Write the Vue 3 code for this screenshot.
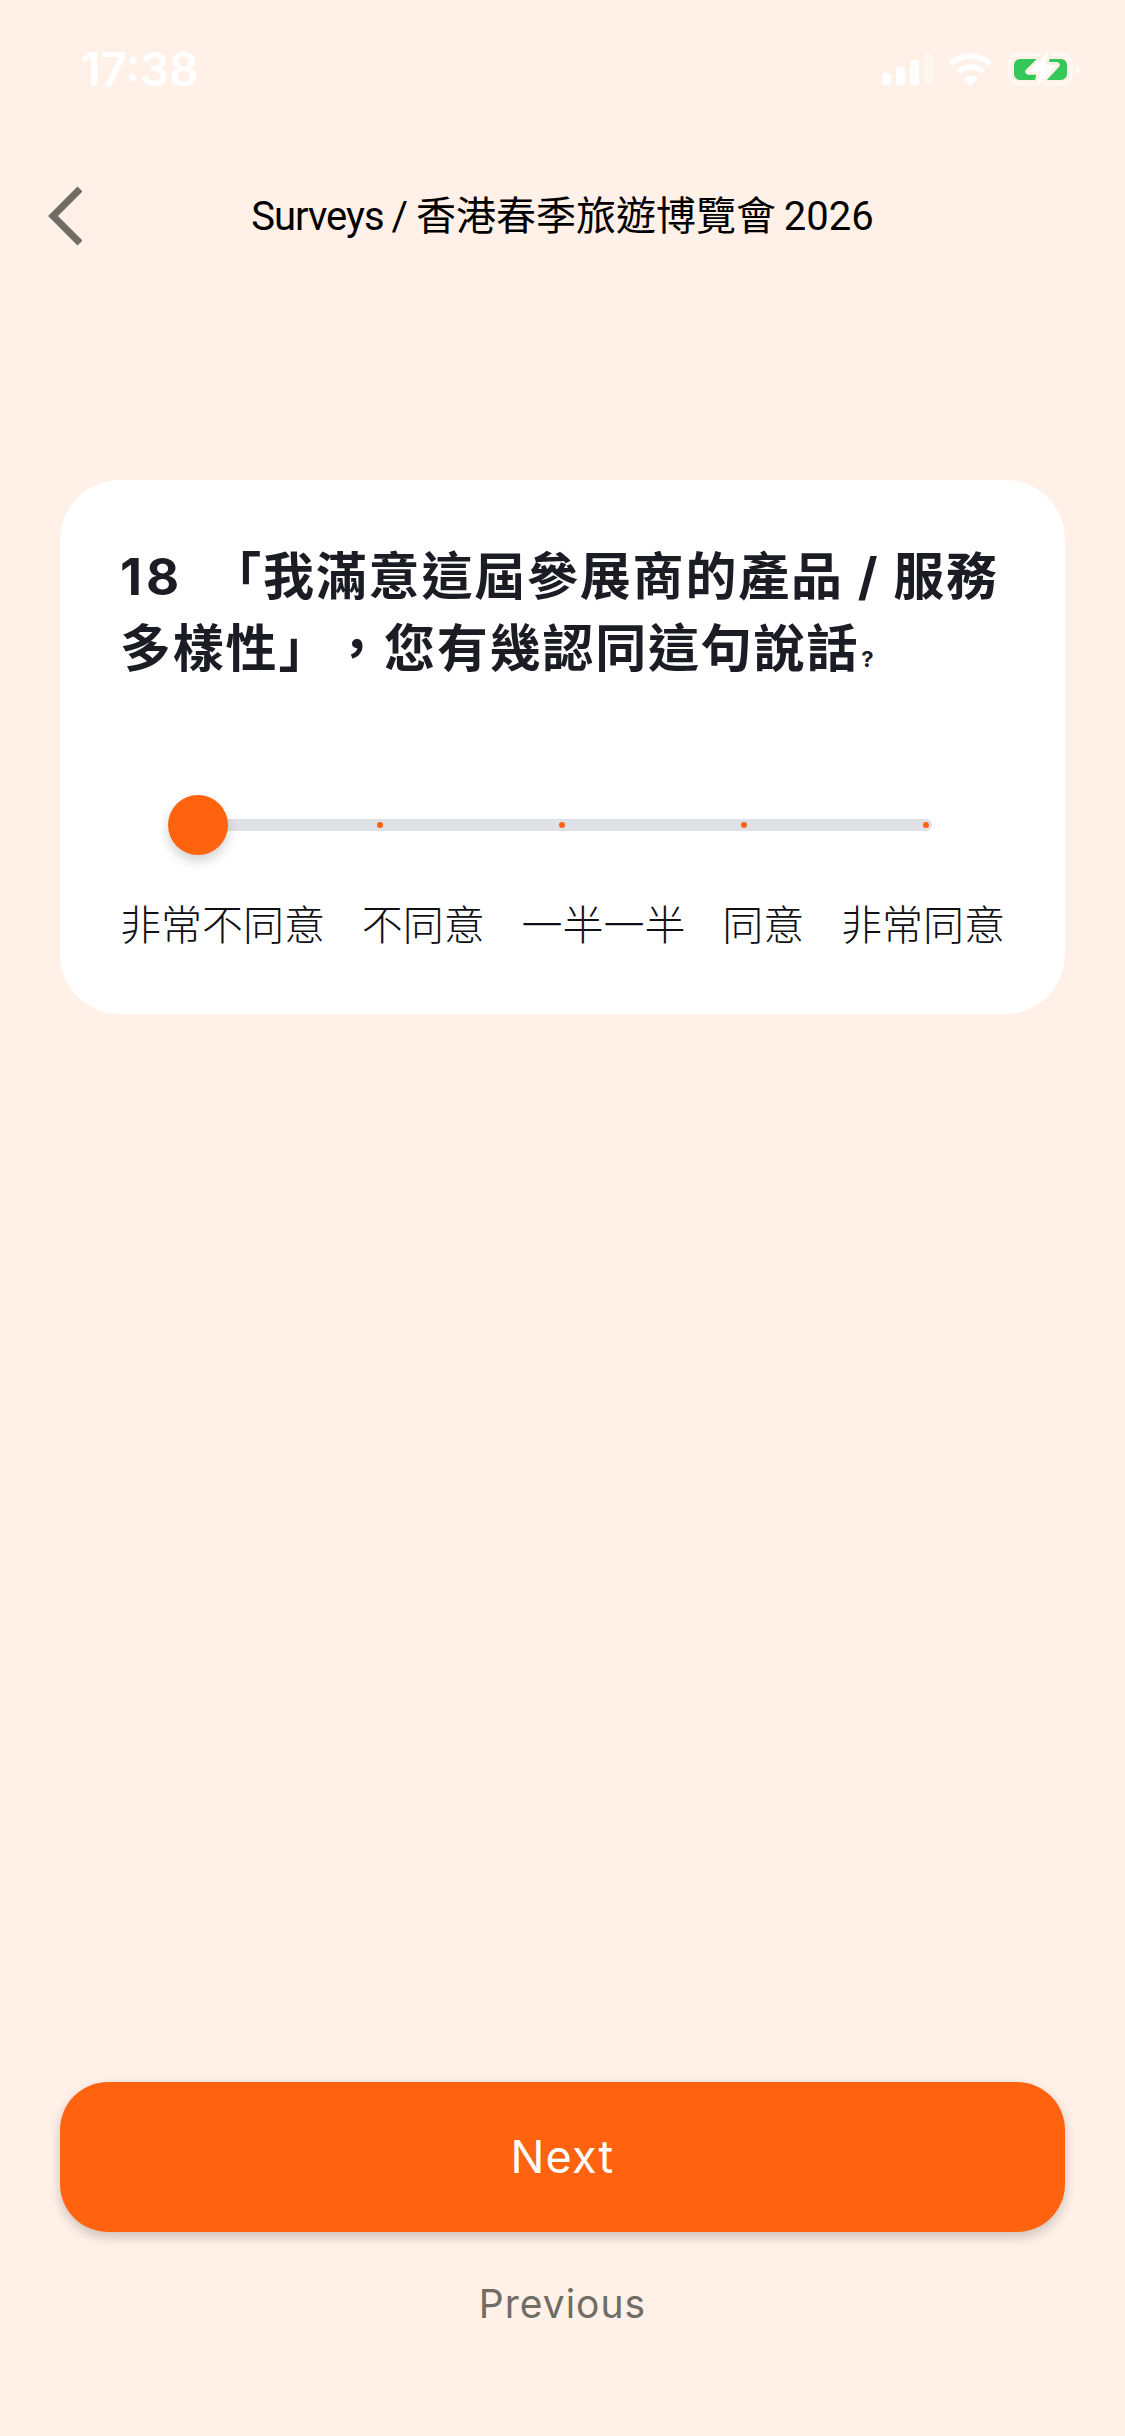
<template>
  <div class="survey-screen">
    <!-- status bar -->
    <div class="status-bar">
      <span class="time">17:38</span>
      <div class="status-icons">
        <svg class="signal" width="51" height="32" viewBox="0 0 51 32">
          <rect x="0" y="20" width="9" height="12" rx="3" fill="#fff" />
          <rect x="14" y="14" width="9" height="18" rx="3" fill="#fff" />
          <rect x="28" y="7" width="9" height="25" rx="3" fill="#fff" />
          <rect x="42" y="0" width="9" height="32" rx="3" fill="#fff" opacity="0.35" />
        </svg>
        <svg class="wifi" width="45" height="33" viewBox="0 0 45 33">
          <path d="M22.5 33 L15.5 25.5 A10 10 0 0 1 29.5 25.5 Z" fill="#fff" />
          <path d="M10 19 A18 18 0 0 1 35 19" fill="none" stroke="#fff" stroke-width="5.5" />
          <path d="M2.5 11 A29 29 0 0 1 42.5 11" fill="none" stroke="#fff" stroke-width="5.5" />
        </svg>
        <svg class="battery" width="74" height="38" viewBox="0 0 74 38">
          <rect x="1.5" y="4.5" width="62" height="29" rx="10" fill="none" stroke="#fff" stroke-width="3" opacity="0.5" />
          <path d="M68 14 Q72 16 72 19 Q72 22 68 24 Z" fill="#fff" opacity="0.6" />
          <rect x="6" y="9" width="53" height="21" rx="6" fill="#34c759" />
          <path d="M40.3 1.7 L20.3 21.7 L32 21.7 L28.7 36.7 L48.7 15 L37 15 Z" fill="#fff" stroke="#fff1e8" stroke-width="6" paint-order="stroke" stroke-linejoin="round" />
        </svg>
      </div>
    </div>

    <!-- header -->
    <header class="top-bar">
      <svg class="back" width="35" height="60" viewBox="0 0 35 60">
        <path d="M33 3 L6 30 L33 57" fill="none" stroke="#706c66" stroke-width="7" />
      </svg>
      <h1 class="top-title"><span class="crumb">Surveys</span> / 香港春季旅遊博覽會 2026</h1>
    </header>

    <!-- question card -->
    <section class="card">
      <p class="question"><span class="q-num">18</span>「我滿意這屆參展商的產品 / 服務多樣性」，您有幾認同這句說話<span class="q-mark">?</span></p>
      <div class="slider">
        <div class="track">
          <span v-for="n in options.length" :key="n" class="dot"></span>
          <span class="thumb"></span>
        </div>
      </div>
      <div class="labels">
        <span v-for="o in options" :key="o">{{ o }}</span>
      </div>
    </section>

    <div class="spacer"></div>

    <button class="btn-next">Next</button>
    <button class="btn-prev">Previous</button>
  </div>
</template>

<script setup>
const options = ['非常不同意', '不同意', '一半一半', '同意', '非常同意']
</script>

<style scoped>
.survey-screen {
  width: 1125px;
  height: 2436px;
  background: #fff1e8;
  display: flex;
  flex-direction: column;
  font-family: Inter, 'Noto Sans CJK TC', sans-serif;
  text-spacing-trim: space-all;
  overflow: hidden;
}

.status-bar {
  height: 52px;
  margin-top: 43px;
  padding: 0 43px 0 81px;
  display: flex;
  align-items: center;
  justify-content: space-between;
}

.time {
  font-size: 46px;
  font-weight: 600;
  line-height: 52px;
  color: #fff;
}

.status-icons {
  display: flex;
  align-items: center;
  gap: 15px;
}

.top-bar {
  position: relative;
  height: 60px;
  margin-top: 91px;
  padding-left: 47px;
  display: flex;
  align-items: center;
}

.top-title {
  position: absolute;
  left: 0;
  right: 0;
  top: 1px;
  margin: 0;
  text-align: center;
  font-family: Roboto, 'Noto Sans CJK TC', sans-serif;
  font-size: 40px;
  font-weight: 400;
  line-height: 60px;
  word-spacing: -2px;
  color: #000;
}

.crumb {
  letter-spacing: -1px;
}

.card {
  margin: 234px 60px 0;
  height: 534px;
  box-sizing: border-box;
  padding: 61px 60px 0;
  background: #fff;
  border-radius: 60px;
}

.question {
  margin: 0;
  font-size: 51px;
  font-weight: 700;
  line-height: 72px;
  letter-spacing: 1.8px;
  color: #1c1c24;
}

.q-num {
  margin-right: 27px;
  letter-spacing: 4px;
}

.q-mark {
  font-size: 22px;
  margin-left: 2px;
}

.slider {
  margin-top: 124px;
  padding: 0 73px 0 78px;
}

.track {
  position: relative;
  height: 12px;
  padding: 0 3px 0 0;
  background: #e0e1e6;
  border-radius: 6px;
  display: flex;
  align-items: center;
  justify-content: space-between;
}

.dot {
  width: 6px;
  height: 6px;
  margin-left: -3px;
  border-radius: 50%;
  background: #ff6310;
}

.thumb {
  position: absolute;
  left: -30px;
  top: -24px;
  width: 60px;
  height: 60px;
  border-radius: 50%;
  background: #ff6310;
  box-shadow: 0 6px 12px rgba(0, 0, 0, 0.18);
}

.labels {
  margin-top: 70px;
  display: flex;
  justify-content: space-between;
  font-size: 41px;
  font-weight: 300;
  line-height: 48px;
  color: #0f0f14;
}

.spacer {
  flex: 1;
}

.btn-next {
  margin: 0 60px;
  height: 150px;
  flex: none;
  border: none;
  border-radius: 48px;
  background: #ff6310;
  box-shadow: 0 5px 12px rgba(0, 0, 0, 0.2);
  color: #fff;
  font-family: inherit;
  font-size: 45px;
  font-weight: 400;
  letter-spacing: 1.2px;
  padding-bottom: 3px;
}

.btn-prev {
  margin: 46px 0 108px;
  height: 50px;
  flex: none;
  border: none;
  background: transparent;
  color: #706c66;
  font-family: inherit;
  font-size: 39px;
  line-height: 50px;
  letter-spacing: 1px;
}
</style>
